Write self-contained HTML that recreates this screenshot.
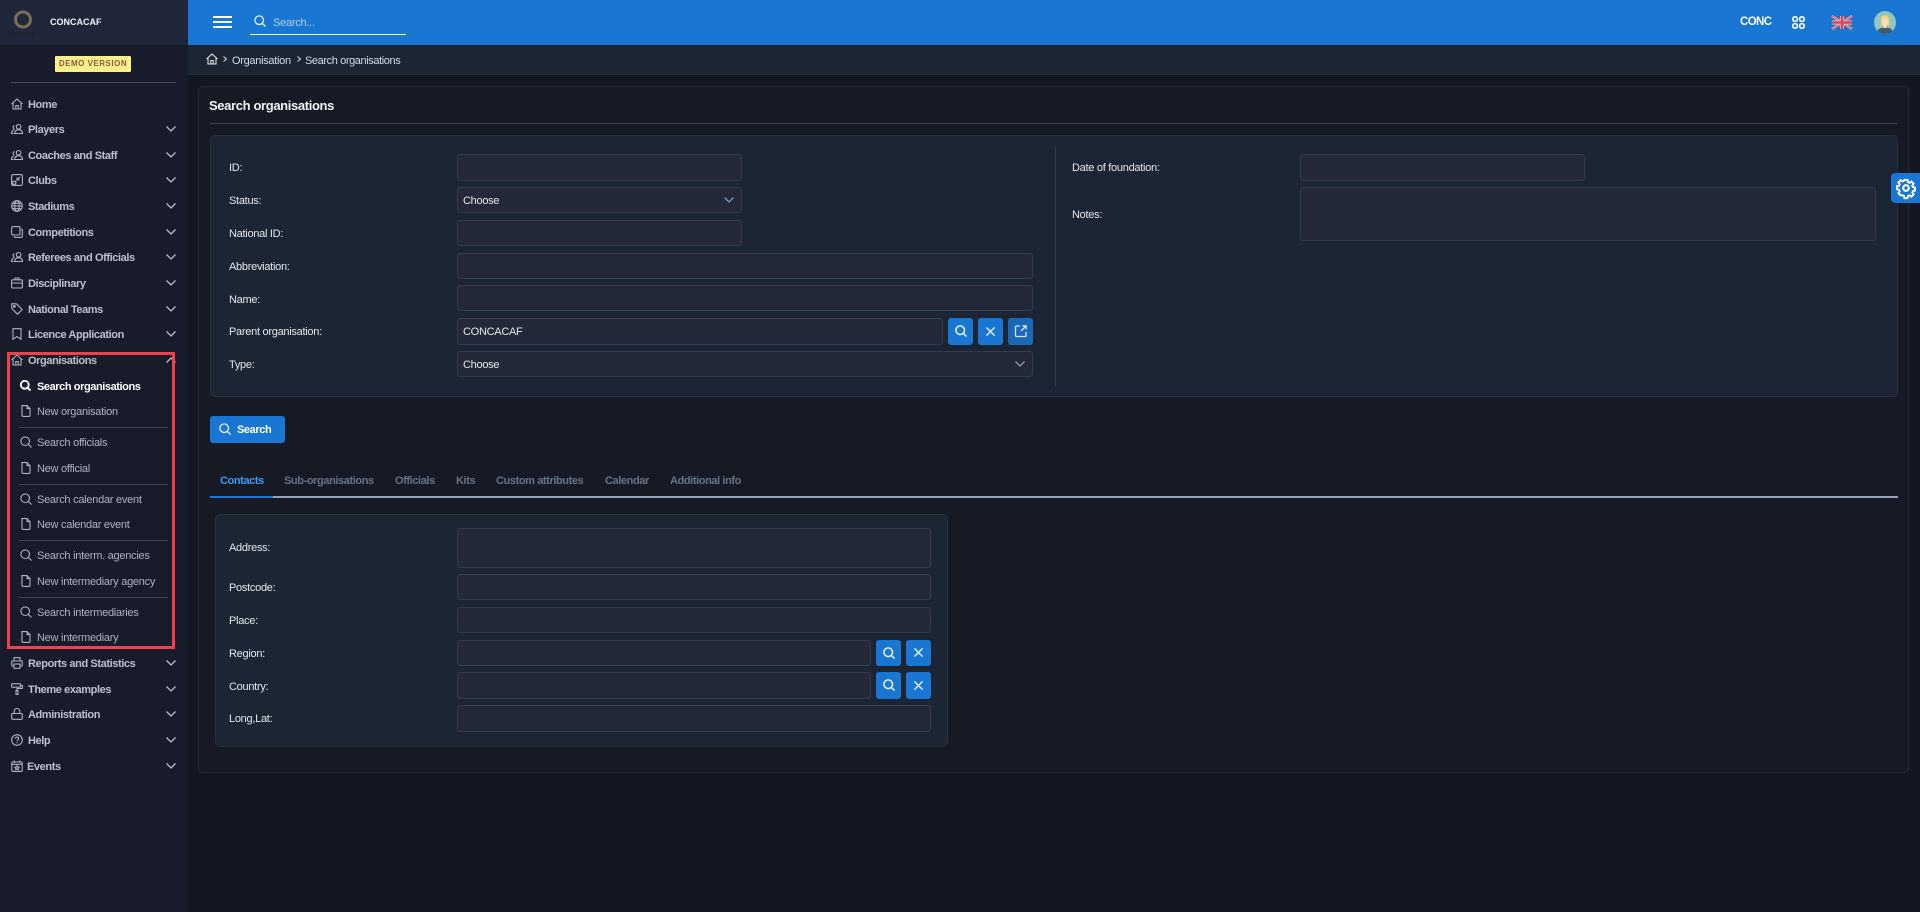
<!DOCTYPE html>
<html lang="en">
<head>
<meta charset="utf-8">
<title>Search organisations</title>
<style>
html,body{margin:0;padding:0;width:1920px;height:912px;overflow:hidden;background:#131722}
body{position:relative;font-family:"Liberation Sans",sans-serif;font-size:11px;color:#e6eaf0}
.b{position:absolute}
.t{position:absolute;white-space:nowrap;line-height:16px;height:16px;margin-top:1px}
.m{color:#bcc1cb;font-weight:bold;left:28px;letter-spacing:-.4px}
.s{color:#aeb3bd;left:37px;letter-spacing:-.26px}
.l{color:#e4e8ee;letter-spacing:-.28px}
.i{position:absolute;box-sizing:border-box;background:#232938;border:1px solid #343b4c;border-radius:3px}
.btn{position:absolute;background:#1976d2;border-radius:3px;width:25px}
.tab{color:#667488;font-weight:bold;top:472px;letter-spacing:-.4px}
svg{position:absolute;overflow:visible}
.ic{fill:none;stroke:#aeb3bd;stroke-width:1.1}
.ch{fill:none;stroke:#b9bec8;stroke-width:1.3}
.w{fill:none;stroke:#e8f1fb;stroke-width:1.5}
.sep{position:absolute;left:19px;width:149px;height:1px;background:#41444f}
</style>
</head>
<body>
<svg width="0" height="0" style="position:absolute">
<defs>
<symbol id="house" viewBox="0 0 12 12"><path d="M.5 6 6 1l5.500 5M2 5v6h8V5M4.800 11V7.500h2.400V11"/></symbol>
<symbol id="people" viewBox="0 0 12 12"><circle cx="7.600" cy="3.800" r="2.300"/><path d="M3.500 10.500c.3-2.600 2-3.800 4.100-3.800s3.800 1.200 4 3.800zM3.500 2.500a2 2 0 0 0 0 3.800M2.800 7C1.400 7.500.5 8.800.4 10.500h2"/></symbol>
<symbol id="clubs" viewBox="0 0 12 12"><rect x=".6" y=".6" width="10.800" height="10.800" rx="1.500"/><rect x="1.800" y="7.300" width="3" height="3"/><path d="M9 3 6 6M6 3.500V6h2.500"/></symbol>
<symbol id="globe" viewBox="0 0 12 12"><circle cx="6" cy="6" r="5.300"/><ellipse cx="6" cy="6" rx="2.300" ry="5.300"/><path d="M.7 6h10.600M1.500 3.300h9M1.500 8.700h9"/></symbol>
<symbol id="copy" viewBox="0 0 12 12"><rect x=".6" y=".6" width="8.400" height="8.400" rx="1.500"/><path d="M10 3c.9.200 1.400.8 1.400 1.700v5c0 1-.7 1.700-1.700 1.700h-5C3.800 11.400 3.200 10.900 3 10"/></symbol>
<symbol id="case" viewBox="0 0 12 12"><rect x=".6" y="2.800" width="10.800" height="8.200" rx="1"/><path d="M4 2.800V1h4v1.800M.6 6h10.800"/></symbol>
<symbol id="tag" viewBox="0 0 12 12"><path d="M.8.800h4.700l5.700 5.700-4.700 4.700L.8 5.500z"/><circle cx="3.400" cy="3.400" r=".9"/></symbol>
<symbol id="mark" viewBox="0 0 12 12"><path d="M2 .7h8v10.600L6 8.500l-4 2.800z"/></symbol>
<symbol id="search" viewBox="0 0 12 12"><circle cx="5.200" cy="5.200" r="4.300"/><path d="m8.300 8.300 3.200 3.200"/></symbol>
<symbol id="file" viewBox="0 0 12 12"><path d="M2 .6h5l3 3v6.600c0 .7-.5 1.200-1.200 1.200H3.200C2.500 11.400 2 10.900 2 10.200zM7 .6v3h3"/></symbol>
<symbol id="print" viewBox="0 0 12 12"><path d="M3 4V.7h6V4M3 9H.8V4h10.400v5H9"/><rect x="3" y="7" width="6" height="4.300"/></symbol>
<symbol id="roller" viewBox="0 0 12 12"><rect x=".6" y=".8" width="9" height="3.400" rx=".6"/><path d="M9.600 2.500h1.800v3H6v2"/><rect x="5" y="7.500" width="2" height="4"/></symbol>
<symbol id="lock" viewBox="0 0 12 12"><rect x=".7" y="5.500" width="10.600" height="5.800" rx="1"/><path d="M3.200 5.500V3.300a2.800 2.800 0 0 1 5.600 0v2.200"/></symbol>
<symbol id="help" viewBox="0 0 12 12"><circle cx="6" cy="6" r="5.300"/><path d="M4.400 4.600C4.500 3.600 5.100 3.100 6 3.100c1 0 1.700.6 1.700 1.500C7.700 5.800 6 5.800 6 7.300M6 8.300v1.100"/></symbol>
<symbol id="cal" viewBox="0 0 12 12"><rect x=".8" y="2" width="10.400" height="9.400" rx="1"/><path d="M3.300.5v2.500M8.700.5v2.500M.8 4.300h10.400M6 5.800l.7 1.300 1.400.2-1 1 .2 1.400L6 9l-1.300.7.200-1.400-1-1 1.400-.2z"/></symbol>
<symbol id="chev" viewBox="0 0 10 6"><path d="M.5.500 5 5 9.500.5"/></symbol>
<symbol id="x" viewBox="0 0 12 12"><path d="m1.500 1.500 9 9m0-9-9 9"/></symbol>
</defs>
</svg>

<!-- Sidebar -->
<div class="b" style="left:0;top:0;width:188px;height:912px;background:#171b2a"></div>
<div class="b" style="left:0;top:0;width:188px;height:45px;background:#20273a"></div>
<svg style="left:12px;top:9px" width="22" height="22"><circle cx="11" cy="10.500" r="7.500" fill="none" stroke="#7a6e52" stroke-width="3"/></svg>
<div class="t" style="left:8px;top:26px;width:32px;font-size:6px;color:#1a1f2c;font-weight:bold">Concacaf</div>
<div class="t" style="left:50px;top:13px;font-size:9px;font-weight:bold;color:#f0f3f7">CONCACAF</div>
<div class="b" style="left:55px;top:56px;width:76px;height:16px;background:#fdf08a;border-radius:1px"></div>
<div class="t" style="left:55px;top:55px;width:76px;text-align:center;font-size:8px;font-weight:bold;letter-spacing:.5px;color:#8c5a4c">DEMO VERSION</div>
<div class="b" style="left:11px;top:82px;width:165px;height:1px;background:#4a4d58"></div>

<svg class="ic" style="left:11px;top:98px" width="12" height="12"><use href="#house"/></svg><div class="t m" style="top:96px">Home</div>
<svg class="ic" style="left:11px;top:123px" width="12" height="12"><use href="#people"/></svg><div class="t m" style="top:121px">Players</div>
<svg class="ic" style="left:11px;top:149px" width="12" height="12"><use href="#people"/></svg><div class="t m" style="top:147px">Coaches and Staff</div>
<svg class="ic" style="left:11px;top:174px" width="12" height="12"><use href="#clubs"/></svg><div class="t m" style="top:172px">Clubs</div>
<svg class="ic" style="left:11px;top:200px" width="12" height="12"><use href="#globe"/></svg><div class="t m" style="top:198px">Stadiums</div>
<svg class="ic" style="left:11px;top:226px" width="12" height="12"><use href="#copy"/></svg><div class="t m" style="top:224px">Competitions</div>
<svg class="ic" style="left:11px;top:251px" width="12" height="12"><use href="#people"/></svg><div class="t m" style="top:249px">Referees and Officials</div>
<svg class="ic" style="left:11px;top:277px" width="12" height="12"><use href="#case"/></svg><div class="t m" style="top:275px">Disciplinary</div>
<svg class="ic" style="left:11px;top:303px" width="12" height="12"><use href="#tag"/></svg><div class="t m" style="top:301px">National Teams</div>
<svg class="ic" style="left:11px;top:328px" width="12" height="12"><use href="#mark"/></svg><div class="t m" style="top:326px">Licence Application</div>
<svg class="ic" style="left:11px;top:354px" width="12" height="12"><use href="#house"/></svg><div class="t m" style="top:352px">Organisations</div>

<svg class="w" style="left:20px;top:380px;stroke:#fff;stroke-width:2" width="11" height="11"><use href="#search"/></svg><div class="t s" style="top:378px;color:#fff;font-weight:bold;letter-spacing:-.42px">Search organisations</div>
<svg class="ic" style="left:20px;top:405px" width="12" height="12"><use href="#file"/></svg><div class="t s" style="top:403px">New organisation</div>
<div class="sep" style="top:427px"></div>
<svg class="ic" style="left:20px;top:436px" width="12" height="12"><use href="#search"/></svg><div class="t s" style="top:434px">Search officials</div>
<svg class="ic" style="left:20px;top:462px" width="12" height="12"><use href="#file"/></svg><div class="t s" style="top:460px">New official</div>
<div class="sep" style="top:484px"></div>
<svg class="ic" style="left:20px;top:493px" width="12" height="12"><use href="#search"/></svg><div class="t s" style="top:491px">Search calendar event</div>
<svg class="ic" style="left:20px;top:518px" width="12" height="12"><use href="#file"/></svg><div class="t s" style="top:516px">New calendar event</div>
<div class="sep" style="top:540px"></div>
<svg class="ic" style="left:20px;top:549px" width="12" height="12"><use href="#search"/></svg><div class="t s" style="top:547px">Search interm. agencies</div>
<svg class="ic" style="left:20px;top:575px" width="12" height="12"><use href="#file"/></svg><div class="t s" style="top:573px">New intermediary agency</div>
<div class="sep" style="top:597px"></div>
<svg class="ic" style="left:20px;top:606px" width="12" height="12"><use href="#search"/></svg><div class="t s" style="top:604px">Search intermediaries</div>
<svg class="ic" style="left:20px;top:631px" width="12" height="12"><use href="#file"/></svg><div class="t s" style="top:629px">New intermediary</div>

<svg class="ic" style="left:11px;top:657px" width="12" height="12"><use href="#print"/></svg><div class="t m" style="top:655px">Reports and Statistics</div>
<svg class="ic" style="left:11px;top:683px" width="12" height="12"><use href="#roller"/></svg><div class="t m" style="top:681px">Theme examples</div>
<svg class="ic" style="left:11px;top:708px" width="12" height="12"><use href="#lock"/></svg><div class="t m" style="top:706px">Administration</div>
<svg class="ic" style="left:11px;top:734px" width="12" height="12"><use href="#help"/></svg><div class="t m" style="top:732px">Help</div>
<svg class="ic" style="left:11px;top:760px" width="12" height="12"><use href="#cal"/></svg><div class="t m" style="top:758px;left:27px">Events</div>

<svg class="ch" style="left:166px;top:126px" width="10" height="6"><use href="#chev"/></svg>
<svg class="ch" style="left:166px;top:152px" width="10" height="6"><use href="#chev"/></svg>
<svg class="ch" style="left:166px;top:177px" width="10" height="6"><use href="#chev"/></svg>
<svg class="ch" style="left:166px;top:203px" width="10" height="6"><use href="#chev"/></svg>
<svg class="ch" style="left:166px;top:229px" width="10" height="6"><use href="#chev"/></svg>
<svg class="ch" style="left:166px;top:254px" width="10" height="6"><use href="#chev"/></svg>
<svg class="ch" style="left:166px;top:280px" width="10" height="6"><use href="#chev"/></svg>
<svg class="ch" style="left:166px;top:306px" width="10" height="6"><use href="#chev"/></svg>
<svg class="ch" style="left:166px;top:331px" width="10" height="6"><use href="#chev"/></svg>
<svg class="ch" style="left:166px;top:357px" width="10" height="6"><path d="M.5 5.500 5 1l4.500 4.500"/></svg>
<svg class="ch" style="left:166px;top:660px" width="10" height="6"><use href="#chev"/></svg>
<svg class="ch" style="left:166px;top:686px" width="10" height="6"><use href="#chev"/></svg>
<svg class="ch" style="left:166px;top:711px" width="10" height="6"><use href="#chev"/></svg>
<svg class="ch" style="left:166px;top:737px" width="10" height="6"><use href="#chev"/></svg>
<svg class="ch" style="left:166px;top:763px" width="10" height="6"><use href="#chev"/></svg>

<!-- Annotation rectangle -->
<div class="b" style="left:7px;top:352px;width:168px;height:297px;box-sizing:border-box;border:3px solid #f2404a"></div>

<!-- Top bar -->
<div class="b" style="left:188px;top:0;width:1732px;height:45px;background:#1976d2"></div>
<div class="b" style="left:213px;top:16px;width:19px;height:2px;background:#fff"></div>
<div class="b" style="left:213px;top:21px;width:19px;height:2px;background:#fff"></div>
<div class="b" style="left:213px;top:26px;width:19px;height:2px;background:#fff"></div>
<svg class="w" style="left:254px;top:15px;stroke-width:1.300" width="12" height="12"><use href="#search"/></svg>
<div class="t" style="left:273px;top:14px;color:#b3d2f0;letter-spacing:-.25px">Search...</div>
<div class="b" style="left:250px;top:34px;width:156px;height:1px;background:#fff"></div>
<div class="t" style="left:1740px;top:13px;font-size:11.500px;font-weight:bold;color:#fff;letter-spacing:-.6px">CONC</div>
<svg style="left:1792px;top:16px;fill:none;stroke:#f0f6fc;stroke-width:1.700" width="13" height="13"><rect x=".9" y=".9" width="4.400" height="4.400" rx="1.800"/><rect x="7.700" y=".9" width="4.400" height="4.400" rx="1.800"/><rect x=".9" y="7.700" width="4.400" height="4.400" rx="1.800"/><rect x="7.700" y="7.700" width="4.400" height="4.400" rx="1.800"/></svg>
<svg style="left:1832px;top:16px" width="20" height="13" viewBox="0 0 20 13"><rect width="20" height="13" fill="#44629f"/><path d="M0 0l20 13M20 0 0 13" stroke="#d6bdc9" stroke-width="2.400"/><path d="M0 0l20 13M20 0 0 13" stroke="#d8536b" stroke-width=".9"/><path d="M10 0v13M0 6.500h20" stroke="#d6bdc9" stroke-width="4.200"/><path d="M10 0v13M0 6.500h20" stroke="#d8475f" stroke-width="2.600"/></svg>
<svg style="left:1874px;top:11px" width="22" height="23" viewBox="0 0 22 23"><defs><clipPath id="av"><ellipse cx="11" cy="11.500" rx="11" ry="11.500"/></clipPath></defs><g clip-path="url(#av)"><rect width="22" height="23" fill="#93c6c2"/><path d="M3 23c0-5 3-6.500 8-6.500s8 1.500 8 6.500z" fill="#42596a"/><path d="M6.800 15V9c0-3 1.800-5 4.200-5s4.200 2 4.200 5v6z" fill="#f1d170"/><ellipse cx="11" cy="10.500" rx="3.200" ry="4" fill="#f8dcbe"/><rect x="9.700" y="13.500" width="2.600" height="3.500" fill="#f8dcbe"/></g></svg>

<!-- Breadcrumb -->
<div class="b" style="left:188px;top:45px;width:1732px;height:29px;background:#1c2534;border-bottom:1px solid #272f3e"></div>
<svg style="left:206px;top:53px;fill:none;stroke:#dfe4eb;stroke-width:1.100" width="12" height="12"><use href="#house"/></svg>
<svg style="left:223px;top:56px;fill:none;stroke:#dfe4eb;stroke-width:1" width="4" height="6"><path d="m.5.500 3 2.500-3 2.500"/></svg>
<div class="t" style="left:232px;top:52px;color:#d4dae3;letter-spacing:-.3px">Organisation</div>
<svg style="left:297px;top:56px;fill:none;stroke:#dfe4eb;stroke-width:1" width="4" height="6"><path d="m.5.500 3 2.500-3 2.500"/></svg>
<div class="t" style="left:305px;top:52px;color:#d4dae3;letter-spacing:-.4px">Search organisations</div>

<!-- Main card -->
<div class="b" style="left:198px;top:86px;width:1711px;height:687px;box-sizing:border-box;background:#161a25;border:1px solid #252a36;border-radius:5px"></div>
<div class="t" style="left:209px;top:97px;font-size:13px;font-weight:bold;color:#f3f5f8;letter-spacing:-.36px">Search organisations</div>
<div class="b" style="left:210px;top:123px;width:1688px;height:1px;background:#3f424c"></div>

<!-- Search panel -->
<div class="b" style="left:210px;top:135px;width:1688px;height:262px;box-sizing:border-box;background:#1c2534;border:1px solid #282f3e;border-radius:5px"></div>
<div class="b" style="left:1055px;top:146px;width:1px;height:240px;background:#343b4a"></div>

<div class="t l" style="left:229px;top:159px">ID:</div>
<div class="i" style="left:457px;top:154px;width:285px;height:27px"></div>
<div class="t l" style="left:229px;top:192px">Status:</div>
<div class="i" style="left:457px;top:187px;width:285px;height:26px"></div>
<div class="t l" style="left:463px;top:192px">Choose</div>
<svg style="left:724px;top:197px;fill:none;stroke:#8a9ab5;stroke-width:1.300" width="10" height="6"><use href="#chev"/></svg>
<div class="t l" style="left:229px;top:225px">National ID:</div>
<div class="i" style="left:457px;top:220px;width:285px;height:26px"></div>
<div class="t l" style="left:229px;top:258px">Abbreviation:</div>
<div class="i" style="left:457px;top:253px;width:576px;height:26px"></div>
<div class="t l" style="left:229px;top:291px">Name:</div>
<div class="i" style="left:457px;top:285px;width:576px;height:26px"></div>
<div class="t l" style="left:229px;top:323px">Parent organisation:</div>
<div class="i" style="left:457px;top:318px;width:486px;height:27px"></div>
<div class="t l" style="left:463px;top:323px">CONCACAF</div>
<div class="btn" style="left:948px;top:318px;height:27px"></div>
<svg class="w" style="left:955px;top:325px" width="12" height="12"><use href="#search"/></svg>
<div class="btn" style="left:978px;top:318px;height:27px"></div>
<svg class="w" style="left:985px;top:326px" width="11" height="11"><use href="#x"/></svg>
<div class="btn" style="left:1008px;top:318px;height:27px;background:#1a69b8"></div>
<svg style="left:1015px;top:325px;fill:none;stroke:#d5e5f5;stroke-width:1.300" width="12" height="12"><path d="M5 1H1.500a1 1 0 0 0-1 1v8.500a1 1 0 0 0 1 1H10a1 1 0 0 0 1-1V7M6 6l5-5M7.500.8h3.700v3.700"/></svg>
<div class="t l" style="left:229px;top:356px">Type:</div>
<div class="i" style="left:457px;top:351px;width:576px;height:26px"></div>
<div class="t l" style="left:463px;top:356px">Choose</div>
<svg style="left:1015px;top:361px;fill:none;stroke:#8a9ab5;stroke-width:1.300" width="10" height="6"><use href="#chev"/></svg>

<div class="t l" style="left:1072px;top:159px">Date of foundation:</div>
<div class="i" style="left:1300px;top:154px;width:285px;height:27px"></div>
<div class="t l" style="left:1072px;top:206px">Notes:</div>
<div class="i" style="left:1300px;top:187px;width:576px;height:54px"></div>

<!-- Settings tab -->
<div class="b" style="left:1891px;top:173px;width:29px;height:30px;background:#1976d2;border-radius:4px 0 0 4px"></div>
<svg style="left:1896px;top:178px;fill:none;stroke:#fff;stroke-width:2.200" width="20" height="20" viewBox="0 0 20 20"><circle cx="10" cy="10" r="2.800"/><path d="M8.300 1h3.400l.5 2.500 1.700.7 2.100-1.400 2.400 2.400-1.400 2.100.7 1.700 2.300.5v3.400l-2.300.5-.7 1.700 1.400 2.100-2.400 2.400-2.100-1.400-1.700.7-.5 2.300H8.300l-.5-2.300-1.700-.7L4 18.100l-2.400-2.400L3 13.600l-.7-1.700L0 11.400V8l2.300-.5.700-1.700-1.400-2.100L4 1.300l2.100 1.400 1.700-.7z" transform="translate(1 1) scale(.9)"/></svg>

<!-- Search button -->
<div class="b" style="left:210px;top:416px;width:75px;height:27px;background:#1976d2;border-radius:3px"></div>
<svg class="w" style="left:219px;top:423px;stroke-width:1.300" width="12" height="12"><use href="#search"/></svg>
<div class="t" style="left:237px;top:421px;color:#fff;font-weight:bold;letter-spacing:-.4px">Search</div>

<!-- Tabs -->
<div class="t tab" style="left:220px;color:#3f9bf2">Contacts</div>
<div class="t tab" style="left:284px">Sub-organisations</div>
<div class="t tab" style="left:395px">Officials</div>
<div class="t tab" style="left:456px">Kits</div>
<div class="t tab" style="left:496px">Custom attributes</div>
<div class="t tab" style="left:605px">Calendar</div>
<div class="t tab" style="left:670px">Additional info</div>
<div class="b" style="left:210px;top:496px;width:1688px;height:2px;background:#98a4b8"></div>
<div class="b" style="left:210px;top:496px;width:63px;height:2px;background:#1976d2"></div>

<!-- Contacts panel -->
<div class="b" style="left:215px;top:514px;width:733px;height:233px;box-sizing:border-box;background:#1c2534;border:1px solid #282f3e;border-radius:5px"></div>
<div class="t l" style="left:229px;top:539px">Address:</div>
<div class="i" style="left:457px;top:528px;width:474px;height:40px"></div>
<div class="t l" style="left:229px;top:579px">Postcode:</div>
<div class="i" style="left:457px;top:574px;width:474px;height:26px"></div>
<div class="t l" style="left:229px;top:612px">Place:</div>
<div class="i" style="left:457px;top:607px;width:474px;height:26px"></div>
<div class="t l" style="left:229px;top:645px">Region:</div>
<div class="i" style="left:457px;top:640px;width:414px;height:26px"></div>
<div class="btn" style="left:876px;top:640px;height:26px"></div>
<svg class="w" style="left:883px;top:647px" width="12" height="12"><use href="#search"/></svg>
<div class="btn" style="left:906px;top:640px;height:26px"></div>
<svg class="w" style="left:913px;top:647px" width="11" height="11"><use href="#x"/></svg>
<div class="t l" style="left:229px;top:678px">Country:</div>
<div class="i" style="left:457px;top:672px;width:414px;height:27px"></div>
<div class="btn" style="left:876px;top:672px;height:27px"></div>
<svg class="w" style="left:883px;top:679px" width="12" height="12"><use href="#search"/></svg>
<div class="btn" style="left:906px;top:672px;height:27px"></div>
<svg class="w" style="left:913px;top:680px" width="11" height="11"><use href="#x"/></svg>
<div class="t l" style="left:229px;top:710px">Long,Lat:</div>
<div class="i" style="left:457px;top:705px;width:474px;height:27px"></div>
</body>
</html>
